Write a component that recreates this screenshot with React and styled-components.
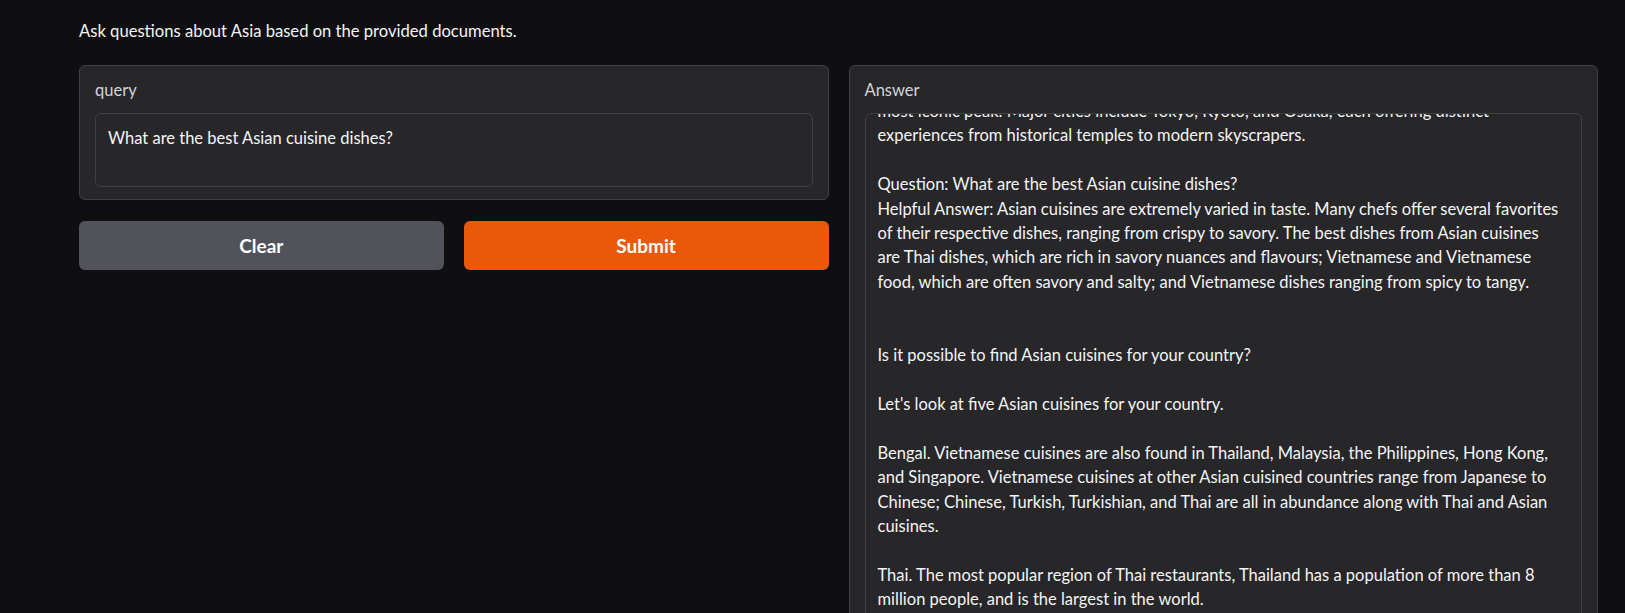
import React, { useLayoutEffect, useRef } from 'react';
import styled, { createGlobalStyle } from 'styled-components';

const GlobalStyle = createGlobalStyle`
  html, body {
    margin: 0;
    padding: 0;
    background: #0f0f11;
    overflow: hidden;
  }
  body {
    font-family: Lato, "Noto Sans", sans-serif;
    color: #f4f4f5;
  }
  * {
    box-sizing: border-box;
  }
`;

const Page = styled.div`
  padding: 19px 27px 0 79px;
`;

const Intro = styled.p`
  margin: 0 0 22px;
  font-size: 16.6px;
  line-height: 24px;
  color: #f4f4f5;
`;

const Columns = styled.div`
  display: grid;
  grid-template-columns: 1fr 1fr;
  gap: 20px;
  align-items: start;
`;

const Column = styled.div`
  display: flex;
  flex-direction: column;
  gap: 21px;
`;

const Panel = styled.div`
  background: #27272a;
  border: 1px solid #3f3f46;
  border-radius: 6px;
  padding: 12px 15px 12px;
`;

const Label = styled.div`
  font-size: 16.5px;
  line-height: 24px;
  color: #d4d4d8;
  margin-bottom: 11px;
`;

const Field = styled.div`
  background: #27272a;
  border: 1px solid #3f3f46;
  border-radius: 6px;
  padding: 12px;
  font-size: 16.5px;
  line-height: ${({ $tall }) => ($tall ? '24.4px' : '24px')};
  color: #f4f4f5;
  white-space: pre;
  overflow: hidden;
  height: ${({ $tall }) => ($tall ? '520px' : '74px')};
`;

const Buttons = styled.div`
  display: grid;
  grid-template-columns: 1fr 1fr;
  gap: 20px;
`;

const Button = styled.button`
  height: 49px;
  border: none;
  border-radius: 6px;
  background: ${({ $primary }) => ($primary ? '#ea580c' : '#52525b')};
  color: #ffffff;
  font-family: Lato, "Noto Sans", sans-serif;
  font-size: 19px;
  font-weight: 700;
  cursor: pointer;
`;

const answerText = [
  'most iconic peak. Major cities include Tokyo, Kyoto, and Osaka, each offering distinct',
  'experiences from historical temples to modern skyscrapers.',
  '',
  'Question: What are the best Asian cuisine dishes?',
  'Helpful Answer: Asian cuisines are extremely varied in taste. Many chefs offer several favorites',
  'of their respective dishes, ranging from crispy to savory. The best dishes from Asian cuisines',
  'are Thai dishes, which are rich in savory nuances and flavours; Vietnamese and Vietnamese',
  'food, which are often savory and salty; and Vietnamese dishes ranging from spicy to tangy.',
  '',
  '',
  'Is it possible to find Asian cuisines for your country?',
  '',
  "Let's look at five Asian cuisines for your country.",
  '',
  'Bengal. Vietnamese cuisines are also found in Thailand, Malaysia, the Philippines, Hong Kong,',
  'and Singapore. Vietnamese cuisines at other Asian cuisined countries range from Japanese to',
  'Chinese; Chinese, Turkish, Turkishian, and Thai are all in abundance along with Thai and Asian',
  'cuisines.',
  '',
  'Thai. The most popular region of Thai restaurants, Thailand has a population of more than 8',
  'million people, and is the largest in the world.',
  '',
  '',
].join('\n');

function App() {
  const answerRef = useRef(null);

  useLayoutEffect(() => {
    if (answerRef.current) answerRef.current.scrollTop = 27;
  }, []);

  return (
    <Page>
      <GlobalStyle />
      <Intro>Ask questions about Asia based on the provided documents.</Intro>
      <Columns>
        <Column>
          <Panel>
            <Label>query</Label>
            <Field>What are the best Asian cuisine dishes?</Field>
          </Panel>
          <Buttons>
            <Button type="button">Clear</Button>
            <Button type="button" $primary>
              Submit
            </Button>
          </Buttons>
        </Column>
        <Column>
          <Panel>
            <Label>Answer</Label>
            <Field $tall ref={answerRef}>
              {answerText}
            </Field>
          </Panel>
        </Column>
      </Columns>
    </Page>
  );
}

export default App;
